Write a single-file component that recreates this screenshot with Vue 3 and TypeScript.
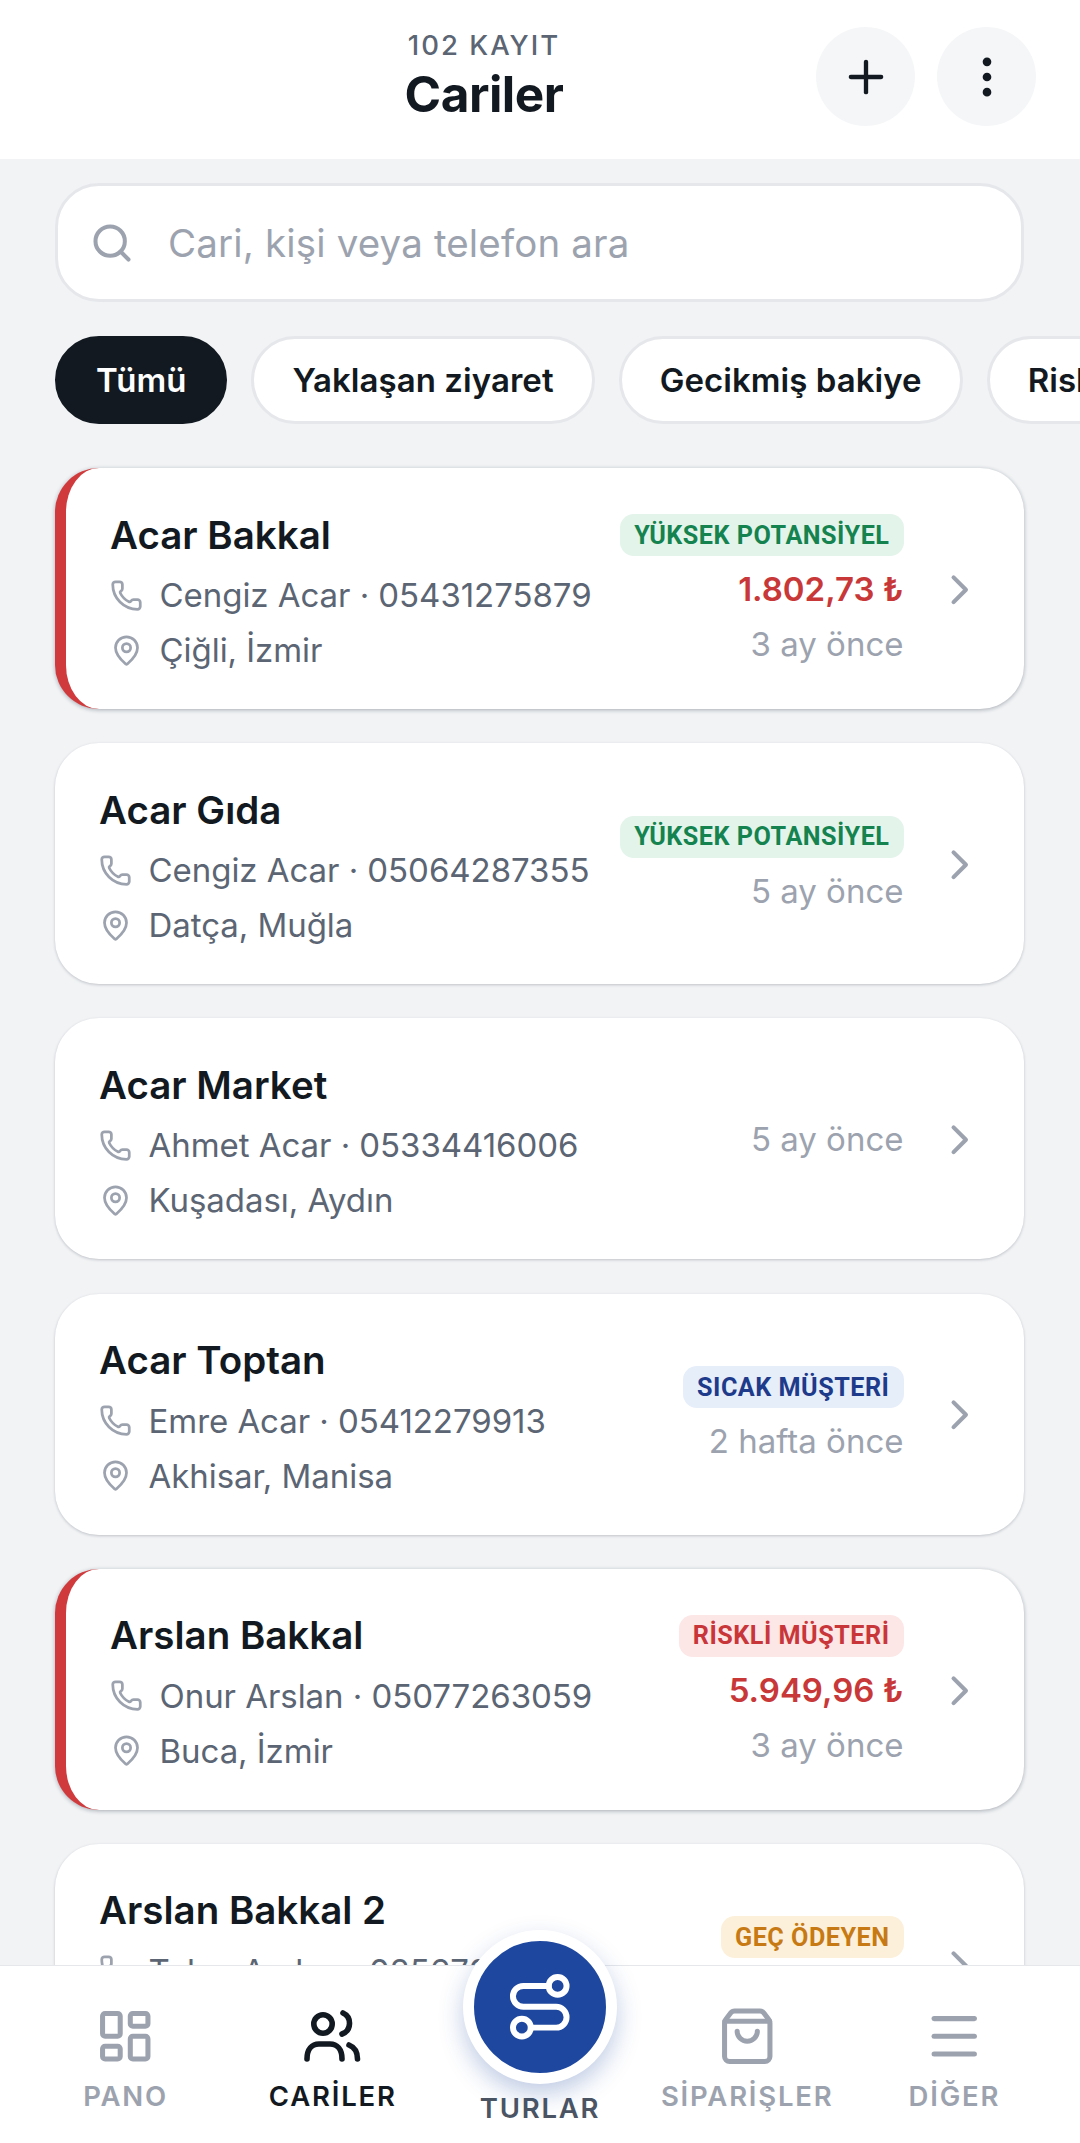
<script setup lang="ts">
interface Customer {
  name: string
  contact: string
  place: string
  time: string
  tag?: { label: string; kind: string }
  amount?: string
  overdue?: boolean
}

const filters: string[] = ['Tümü', 'Yaklaşan ziyaret', 'Gecikmiş bakiye', 'Riskli müşteri']

const customers: Customer[] = [
  { name: 'Acar Bakkal', contact: 'Cengiz Acar · 05431275879', place: 'Çiğli, İzmir', time: '3 ay önce', tag: { label: 'YÜKSEK POTANSİYEL', kind: 'green' }, amount: '1.802,73 ₺', overdue: true },
  { name: 'Acar Gıda', contact: 'Cengiz Acar · 05064287355', place: 'Datça, Muğla', time: '5 ay önce', tag: { label: 'YÜKSEK POTANSİYEL', kind: 'green' } },
  { name: 'Acar Market', contact: 'Ahmet Acar · 05334416006', place: 'Kuşadası, Aydın', time: '5 ay önce' },
  { name: 'Acar Toptan', contact: 'Emre Acar · 05412279913', place: 'Akhisar, Manisa', time: '2 hafta önce', tag: { label: 'SICAK MÜŞTERİ', kind: 'blue' } },
  { name: 'Arslan Bakkal', contact: 'Onur Arslan · 05077263059', place: 'Buca, İzmir', time: '3 ay önce', tag: { label: 'RİSKLİ MÜŞTERİ', kind: 'red' }, amount: '5.949,96 ₺', overdue: true },
  { name: 'Arslan Bakkal 2', contact: 'Tolga Arslan · 02567091482', place: 'Merkez, Manisa', time: '4 ay önce', tag: { label: 'GEÇ ÖDEYEN', kind: 'amber' } }
]
</script>

<template>
  <div class="screen">
    <header class="topbar">
      <div class="heading">
        <div class="count">102 KAYIT</div>
        <div class="title">Cariler</div>
      </div>
      <button class="round-btn">
        <svg class="ico-btn" viewBox="0 0 24 24"><path d="M5 12h14" /><path d="M12 5v14" /></svg>
      </button>
      <button class="round-btn">
        <svg class="ico-btn" viewBox="0 0 24 24">
          <circle cx="12" cy="12" r="1" />
          <circle cx="12" cy="5" r="1" />
          <circle cx="12" cy="19" r="1" />
        </svg>
      </button>
    </header>

    <main class="content">
      <div class="search">
        <svg class="ico-search" viewBox="0 0 24 24"><path d="m21 21-4.34-4.34" /><circle cx="11" cy="11" r="8" /></svg>
        <span class="placeholder">Cari, kişi veya telefon ara</span>
      </div>

      <div class="chips">
        <span v-for="(f, i) in filters" :key="f" class="chip" :class="{ active: i === 0 }">{{ f }}</span>
      </div>

      <div class="list">
        <article v-for="c in customers" :key="c.name" class="card" :class="{ overdue: c.overdue }">
          <div class="info">
            <div class="name">{{ c.name }}</div>
            <div class="row">
              <svg class="ico-row" viewBox="0 0 24 24">
                <path d="M13.832 16.568a1 1 0 0 0 1.213-.303l.355-.465A2 2 0 0 1 17 15h3a2 2 0 0 1 2 2v3a2 2 0 0 1-2 2A18 18 0 0 1 2 4a2 2 0 0 1 2-2h3a2 2 0 0 1 2 2v3a2 2 0 0 1-.8 1.6l-.468.351a1 1 0 0 0-.292 1.233 14 14 0 0 0 6.392 6.384" />
              </svg>
              <span>{{ c.contact }}</span>
            </div>
            <div class="row">
              <svg class="ico-row" viewBox="0 0 24 24">
                <path d="M20 10c0 4.993-5.539 10.193-7.399 11.799a1 1 0 0 1-1.202 0C9.539 20.193 4 14.993 4 10a8 8 0 0 1 16 0" />
                <circle cx="12" cy="10" r="3" />
              </svg>
              <span>{{ c.place }}</span>
            </div>
          </div>
          <div class="side">
            <span v-if="c.tag" class="tag" :class="c.tag.kind">{{ c.tag.label }}</span>
            <span v-if="c.amount" class="amount">{{ c.amount }}</span>
            <span class="time">{{ c.time }}</span>
          </div>
          <svg class="ico-chevron" viewBox="0 0 24 24"><path d="m9 18 6-6-6-6" /></svg>
        </article>
      </div>
    </main>

    <nav class="tabbar">
      <div class="tab">
        <svg class="ico-tab" viewBox="0 0 24 24">
          <rect width="7" height="9" x="3" y="3" rx="1" />
          <rect width="7" height="5" x="14" y="3" rx="1" />
          <rect width="7" height="9" x="14" y="12" rx="1" />
          <rect width="7" height="5" x="3" y="16" rx="1" />
        </svg>
        <span class="tab-label">PANO</span>
      </div>
      <div class="tab current">
        <svg class="ico-tab users" viewBox="3 2 60.5 60.5">
          <circle cx="23" cy="20" r="9.2" />
          <path d="M43 9A11.4 11.4 0 0 1 42 30" />
          <path d="M7 55C7 45 12 40 19 40H30C37 40 42 45 42 55" />
          <path d="M49 41C54 43 57.5 48 57.5 55" />
        </svg>
        <span class="tab-label">CARİLER</span>
      </div>
      <div class="tab center">
        <div class="fab">
          <svg class="ico-fab" viewBox="0 0 24 24">
            <circle cx="6" cy="19" r="3" />
            <path d="M9 19h8.5a3.5 3.5 0 0 0 0-7h-11a3.5 3.5 0 0 1 0-7H15" />
            <circle cx="18" cy="5" r="3" />
          </svg>
        </div>
        <span class="tab-label">TURLAR</span>
      </div>
      <div class="tab">
        <svg class="ico-tab" viewBox="0 0 24 24">
          <path d="M16 10a4 4 0 0 1-8 0" />
          <path d="M3.103 6.034h17.794" />
          <path d="M3.4 5.467a2 2 0 0 0-.4 1.2V20a2 2 0 0 0 2 2h14a2 2 0 0 0 2-2V6.667a2 2 0 0 0-.4-1.2l-2-2.667A2 2 0 0 0 17 2H7a2 2 0 0 0-1.6.8z" />
        </svg>
        <span class="tab-label">SİPARİŞLER</span>
      </div>
      <div class="tab">
        <svg class="ico-tab" viewBox="0 0 24 24"><path d="M4 5h16" /><path d="M4 12h16" /><path d="M4 19h16" /></svg>
        <span class="tab-label">DİĞER</span>
      </div>
    </nav>
  </div>
</template>

<style scoped>
svg {
  fill: none;
  stroke: currentColor;
  stroke-width: 2;
  stroke-linecap: round;
  stroke-linejoin: round;
  flex-shrink: 0;
  display: block;
}

.screen {
  width: 1080px;
  height: 2143px;
  display: flex;
  flex-direction: column;
  overflow: hidden;
  background: #f1f3f5;
  color: #131921;
  font-family: Inter, "Noto Sans", sans-serif;
}

.topbar {
  height: 159px;
  flex-shrink: 0;
  box-sizing: border-box;
  display: flex;
  align-items: center;
  gap: 22px;
  padding: 0 44px 6px 174px;
  background: #fff;
}

.heading {
  flex: 1;
  text-align: center;
  padding-bottom: 2px;
}

.count {
  font-size: 27.5px;
  line-height: 36px;
  font-weight: 500;
  letter-spacing: 2px;
  color: #5b6573;
}

.title {
  font-size: 49.5px;
  line-height: 60px;
  font-weight: 700;
  letter-spacing: -0.5px;
  margin-top: 1px;
}

.round-btn {
  width: 99px;
  height: 99px;
  padding: 0;
  border: none;
  border-radius: 50%;
  background: #f5f6f8;
  color: #131921;
  display: flex;
  align-items: center;
  justify-content: center;
}

.ico-btn {
  width: 52px;
  height: 52px;
}

.content {
  flex: 1;
  min-height: 0;
  overflow: hidden;
  padding: 24px 56px 0 55px;
}

.search {
  height: 119px;
  box-sizing: border-box;
  display: flex;
  align-items: center;
  gap: 34px;
  padding: 0 32px;
  background: #fff;
  border: 3px solid #e5e7eb;
  border-radius: 44px;
}

.ico-search {
  width: 44px;
  height: 44px;
  color: #9ca3af;
  stroke-width: 2.2;
}

.placeholder {
  font-size: 38.5px;
  letter-spacing: 0.15px;
  color: #9ca3af;
}

.chips {
  display: flex;
  gap: 24px;
  margin: 34px -56px 0 0;
}

.chip {
  flex-shrink: 0;
  height: 88px;
  box-sizing: border-box;
  display: flex;
  align-items: center;
  padding: 0 38px;
  border: 3px solid #e5e7eb;
  border-radius: 44px;
  background: #fff;
  font-size: 33px;
  font-weight: 600;
  letter-spacing: 0.05px;
}

.chip.active {
  background: #131921;
  border-color: #131921;
  color: #fff;
}

.list {
  display: flex;
  flex-direction: column;
  gap: 34.2px;
  margin-top: 44px;
}

.card {
  height: 241px;
  flex-shrink: 0;
  box-sizing: border-box;
  display: flex;
  align-items: center;
  padding: 0 40px 0 44px;
  background: #fff;
  border-radius: 44px;
  box-shadow: 0 1px 3px rgba(17, 24, 39, 0.22);
}

.card.overdue {
  border-left: 11px solid #d03a3c;
  box-shadow: 0 1px 4px rgba(17, 24, 39, 0.32);
}

.info {
  flex: 1;
  min-width: 0;
  padding-top: 5px;
}

.name {
  font-size: 38.5px;
  line-height: 46px;
  font-weight: 600;
  margin-bottom: 17px;
}

.row {
  display: flex;
  align-items: center;
  gap: 16.5px;
  height: 41px;
  font-size: 33px;
  letter-spacing: -0.05px;
  color: #5b6573;
  white-space: nowrap;
}

.row + .row {
  margin-top: 14px;
}

.ico-row {
  width: 33px;
  height: 33px;
  color: #9ca3af;
}

.side {
  display: flex;
  flex-direction: column;
  align-items: flex-end;
  gap: 13px;
}

.overdue .side {
  padding-top: 2px;
}

.tag {
  height: 42px;
  box-sizing: border-box;
  display: flex;
  align-items: center;
  padding: 0 14px;
  border-radius: 14px;
  font-family: Roboto, Inter, sans-serif;
  font-size: 25.2px;
  font-weight: 700;
  letter-spacing: 0.5px;
  white-space: nowrap;
}

.tag.green {
  background: #e3f4ea;
  color: #15834f;
}

.tag.blue {
  background: #e6eefa;
  color: #1e3a8a;
}

.tag.red {
  background: #fce6e6;
  color: #c9363a;
}

.tag.amber {
  background: #fdf0da;
  color: #c77a14;
}

.amount {
  font-size: 33px;
  line-height: 40px;
  font-weight: 600;
  margin-bottom: 2px;
  color: #c93838;
}

.time {
  font-size: 33px;
  line-height: 41px;
  color: #9ca3af;
}

.time:only-child {
  margin-top: 2px;
}

.ico-chevron {
  width: 49.5px;
  height: 49.5px;
  margin: 2px 0 0 31px;
  color: #9ca3af;
}

.tabbar {
  height: 178px;
  flex-shrink: 0;
  box-sizing: border-box;
  display: flex;
  padding: 0 22px;
  background: #fff;
  border-top: 1px solid #e5e7eb;
  position: relative;
}

.tab {
  flex: 1;
  min-width: 0;
  display: flex;
  flex-direction: column;
  align-items: center;
  padding-top: 40px;
  color: #9ca3af;
}

.tab.current {
  color: #131921;
}

.tab.center {
  position: relative;
  color: #4b5563;
}

.ico-tab {
  width: 60.5px;
  height: 60.5px;
}

.ico-tab.users {
  stroke-width: 5.6;
}

.tab-label {
  font-size: 27.5px;
  line-height: 33px;
  font-weight: 600;
  letter-spacing: 1.8px;
  margin-top: 13px;
  white-space: nowrap;
}

.center .tab-label {
  margin-top: 85.5px;
}

.fab {
  position: absolute;
  top: -36px;
  left: 50%;
  margin-left: -77px;
  width: 154px;
  height: 154px;
  box-sizing: border-box;
  border: 11px solid #fff;
  border-radius: 50%;
  background: #1e479f;
  color: #fff;
  display: flex;
  align-items: center;
  justify-content: center;
  box-shadow: 0 10px 24px rgba(30, 71, 159, 0.28);
}

.ico-fab {
  width: 71.5px;
  height: 71.5px;
}
</style>

<style>
html,
body {
  margin: 0;
  background: #f1f3f5;
}
</style>
